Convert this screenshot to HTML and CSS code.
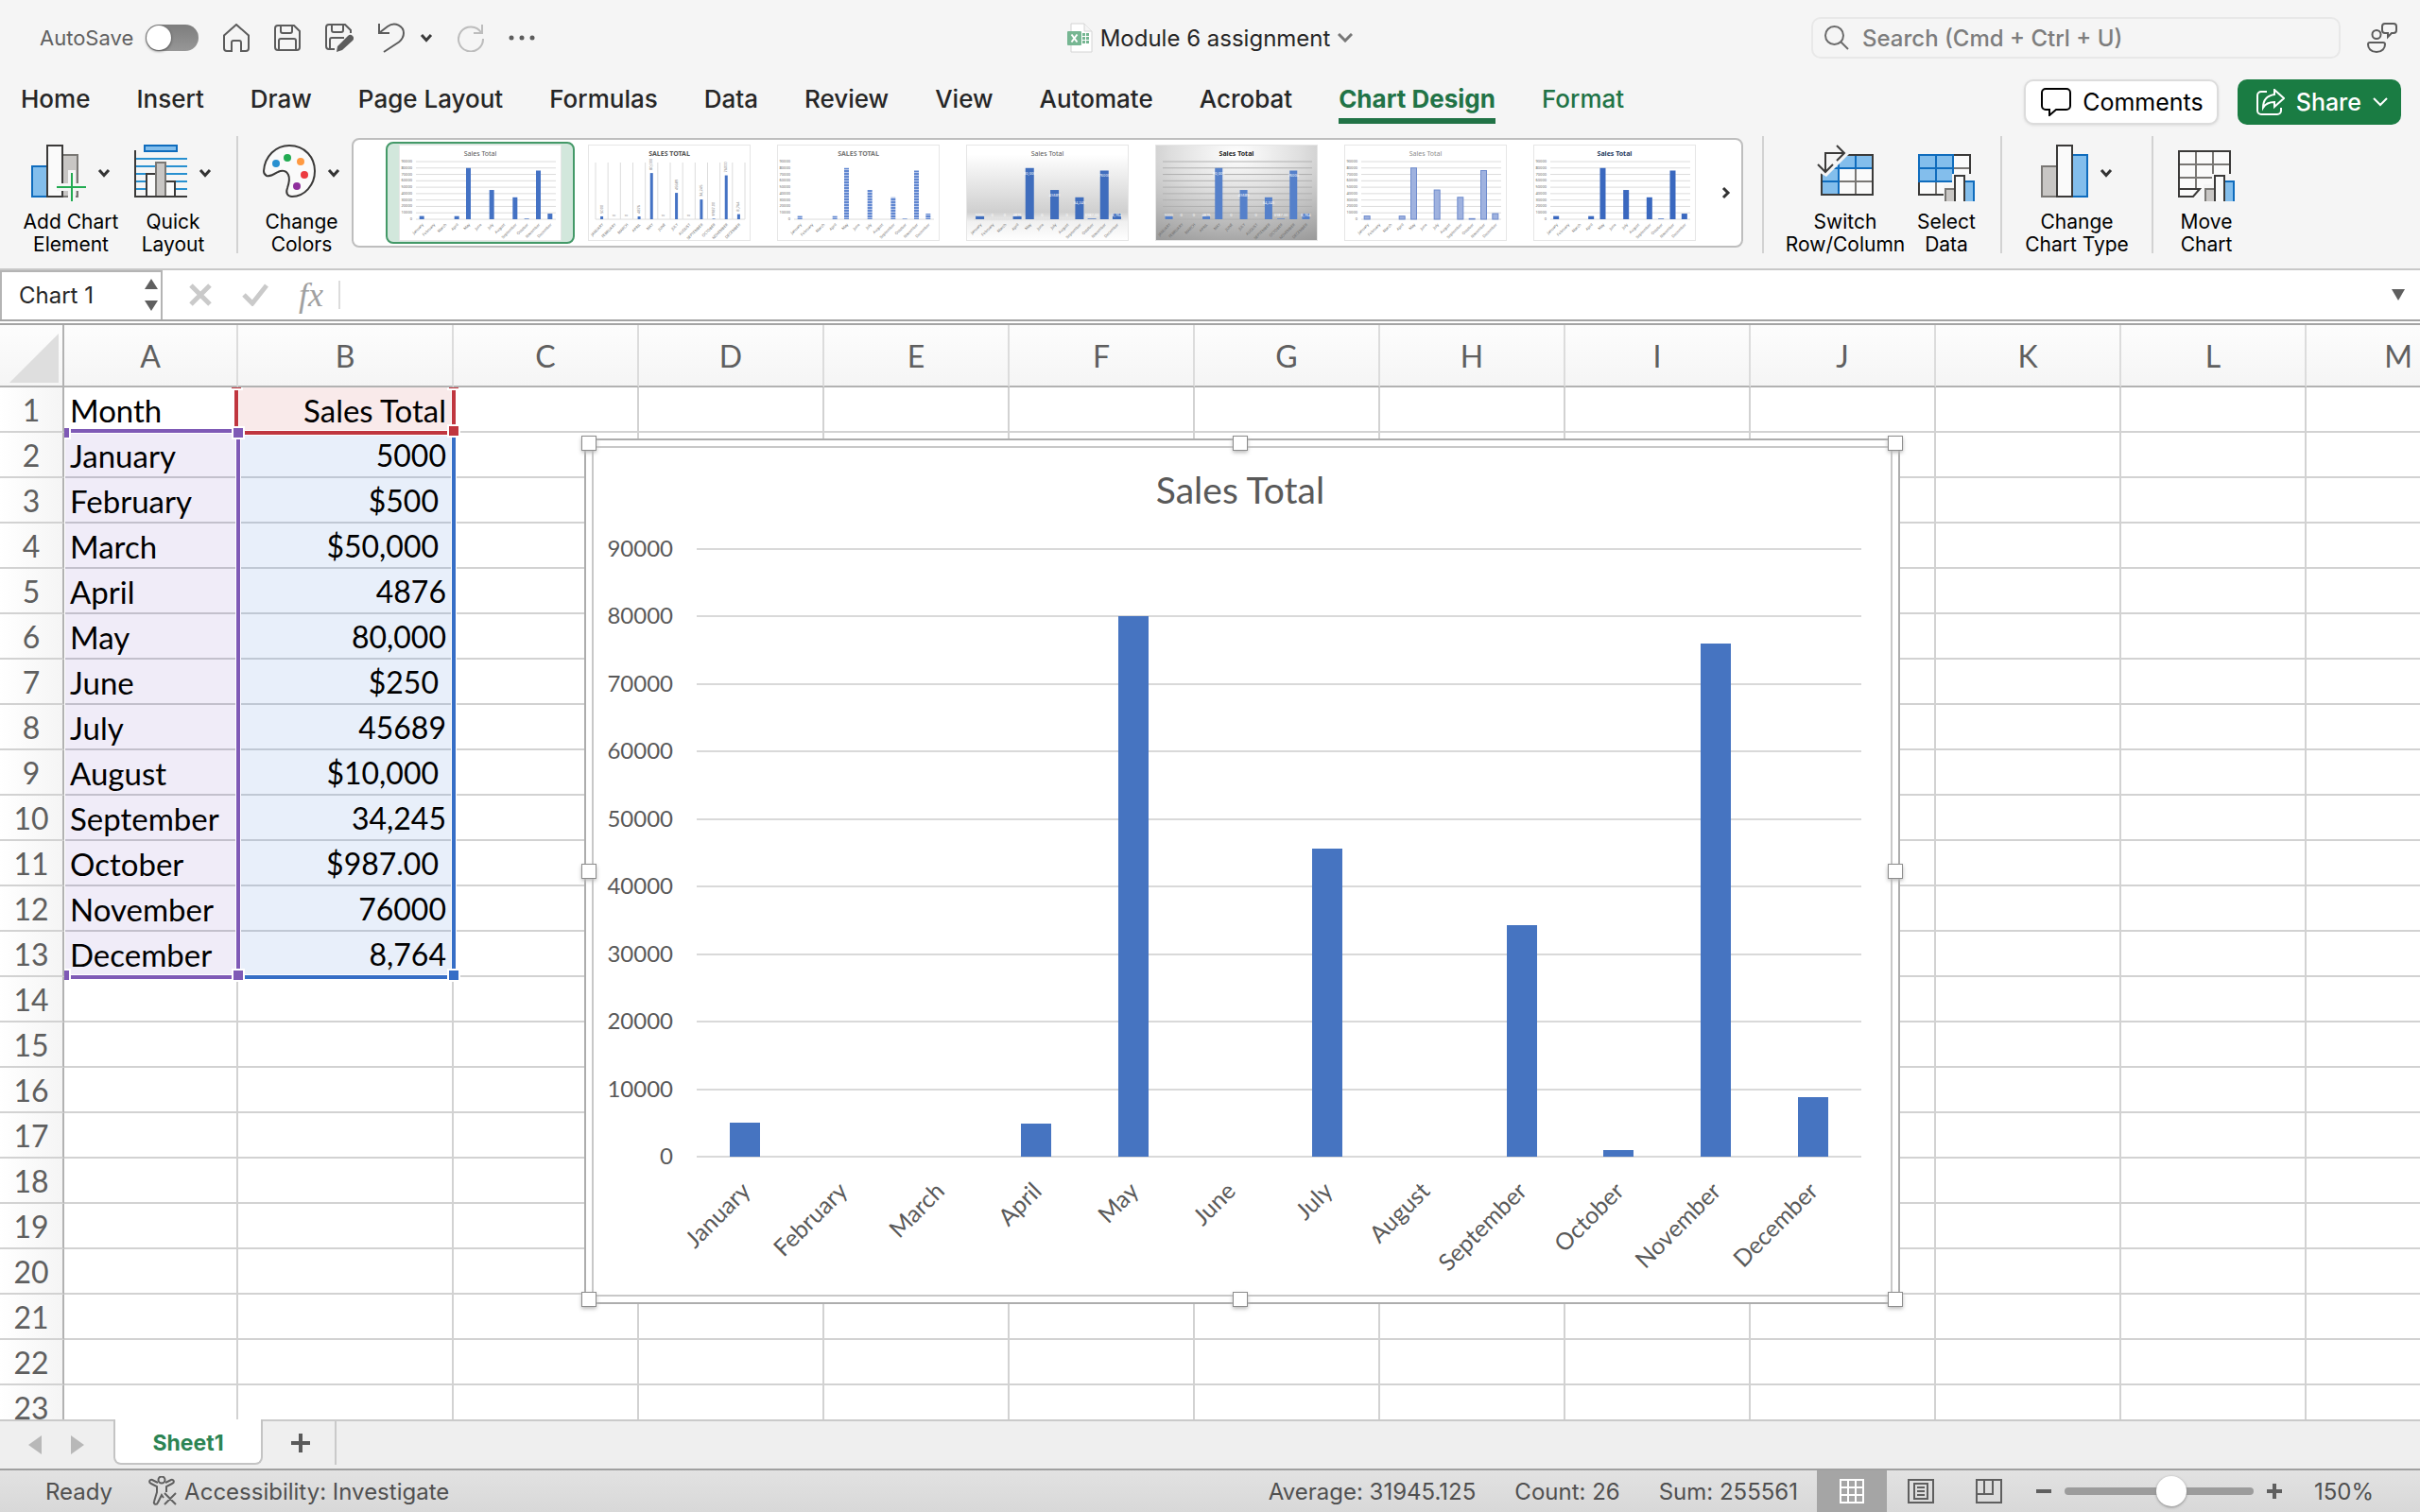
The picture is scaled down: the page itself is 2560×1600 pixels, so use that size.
FILE: index.html
```html
<!DOCTYPE html>
<html lang="en">
<head>
    <meta charset="UTF-8">
    <meta name="viewport" content="width=device-width, initial-scale=1.0">
    <title>Module 6 assignment</title>
    <link rel="stylesheet" href="styles.css">
</head>
<body>
    <svg class="defs" aria-hidden="true">
        <symbol id="chevron" viewBox="0 0 14 10">
            <path d="M2 2l5 5.500 5-5.500" fill="none" stroke="currentColor" stroke-width="3"/>
        </symbol>
        <symbol id="chevron-thin" viewBox="0 0 16 10">
            <path d="M1 1l7 7 7-7" fill="none" stroke="currentColor" stroke-width="2"/>
        </symbol>
        <symbol id="mini-bars" viewBox="0 0 34 34">
            <rect x="-1" y="11" width="13" height="24" fill="#f5f5f5"/>
            <rect x="9" y="-1" width="26" height="36" fill="#f5f5f5"/>
            <rect x="2" y="16" width="11" height="16" fill="#c8c6c4" stroke="#797774" stroke-width="2"/>
            <rect x="22" y="8" width="10" height="24" fill="#83beec" stroke="#0f6cbd" stroke-width="2"/>
            <rect x="12" y="2" width="10" height="30" fill="#fafafa" stroke="#3b3a39" stroke-width="2"/>
        </symbol>
    </svg>

    <header class="titlebar">
        <div class="quick">
            <label class="autosave">AutoSave <input type="checkbox" class="toggle"></label>
            <button class="icon" aria-label="Home">
                <svg width="28" height="30" viewBox="0 0 28 30"><path d="M1 12.500L14 1l13 11.500V26a3 3 0 0 1-3 3h-5v-9a2 2 0 0 0-2-2h-6a2 2 0 0 0-2 2v9H4a3 3 0 0 1-3-3z"/></svg>
            </button>
            <button class="icon" aria-label="Save">
                <svg width="28" height="28" viewBox="0 0 28 28"><path d="M4 1h17l6 6v17a3 3 0 0 1-3 3H4a3 3 0 0 1-3-3V4a3 3 0 0 1 3-3zM7 1v6a2 2 0 0 0 2 2h8a2 2 0 0 0 2-2V1M5 27V17a2 2 0 0 1 2-2h14a2 2 0 0 1 2 2v10"/></svg>
            </button>
            <button class="icon" aria-label="Save as">
                <svg width="30" height="30" viewBox="0 0 30 30"><path d="M10 27H4a3 3 0 0 1-3-3V4a3 3 0 0 1 3-3h17l6 6v3M7 1v6a2 2 0 0 0 2 2h8a2 2 0 0 0 2-2V1M5 27V17a2 2 0 0 1 2-2h13"/><path class="solid" d="M13 24L24 13a3.500 3.500 0 0 1 5 5L18 28l-6 2z"/></svg>
            </button>
            <div class="split">
                <button class="icon" aria-label="Undo">
                    <svg width="28" height="32" viewBox="0 0 28 32"><path d="M1 1v10h11M1.500 10.500L10 4c8-6 17 0 17 7 0 4-2 7-5 9.500L6 31"/></svg>
                </button>
                <button class="icon dark" aria-label="Undo history"><svg width="14" height="10"><use href="#chevron"/></svg></button>
            </div>
            <button class="icon off" aria-label="Redo">
                <svg width="28" height="30" viewBox="0 0 28 30"><path d="M25 9.500A13 13 0 1 0 27 16M26 1v9h-9"/></svg>
            </button>
            <button class="icon" aria-label="More">
                <svg width="28" height="6" viewBox="0 0 28 6"><g class="solid"><circle cx="3" cy="3" r="2.500"/><circle cx="14" cy="3" r="2.500"/><circle cx="25" cy="3" r="2.500"/></g></svg>
            </button>
        </div>

        <button class="document">
            <svg width="27" height="32" viewBox="0 0 27 32">
                <path d="M4 1h14l8 8v22H4z" fill="#fff" stroke="#d4d4d4"/>
                <path d="M18 1v8h8" fill="#f4f4f4" stroke="#d4d4d4"/>
                <rect y="9" width="15" height="15" rx="1" fill="#76b692"/>
                <path d="M4.500 12.500l6 8M10.500 12.500l-6 8" stroke="#fff" stroke-width="2"/>
                <path d="M16 12.500h7M16 16.500h7M16 20.500h7" stroke="#76b692" stroke-width="3" stroke-dasharray="3 1"/>
            </svg>
            Module 6 assignment
            <svg width="16" height="10" viewBox="0 0 16 10" class="muted"><path d="M1 1l7 7 7-7" fill="none" stroke="currentColor" stroke-width="3"/></svg>
        </button>

        <div class="find">
            <label class="search">
                <svg width="26" height="26" viewBox="0 0 26 26"><circle cx="10.500" cy="10.500" r="9.500"/><path d="M17 17l8 8"/></svg>
                <input type="search" aria-label="Search" placeholder="Search (Cmd + Ctrl + U)">
            </label>
            <button class="icon" aria-label="Feedback">
                <svg width="32" height="32" viewBox="0 0 32 32"><circle cx="10" cy="12.500" r="4.500"/><path d="M3 21h14a2 2 0 0 1 2 2c0 4-3 8-9 8s-9-4-9-8a2 2 0 0 1 2-2zM19 1h9a3 3 0 0 1 3 3v4a3 3 0 0 1-3 3h-2l-4 4v-4h-3a3 3 0 0 1-3-3V4a3 3 0 0 1 3-3z"/></svg>
            </button>
        </div>
    </header>

    <nav class="tabs">
        <a href="#">Home</a>
        <a href="#">Insert</a>
        <a href="#">Draw</a>
        <a href="#">Page Layout</a>
        <a href="#">Formulas</a>
        <a href="#">Data</a>
        <a href="#">Review</a>
        <a href="#">View</a>
        <a href="#">Automate</a>
        <a href="#">Acrobat</a>
        <a href="#" class="context active">Chart Design</a>
        <a href="#" class="context">Format</a>
        <div class="actions">
            <button class="comments">
                <svg width="32" height="30" viewBox="0 0 32 30"><path d="M5 1h22a4 4 0 0 1 4 4v14a4 4 0 0 1-4 4H16l-7 6v-6H5a4 4 0 0 1-4-4V5a4 4 0 0 1 4-4z"/></svg>
                Comments
            </button>
            <button class="share">
                <svg width="30" height="28" viewBox="0 0 30 28"><path d="M11 3H5a4 4 0 0 0-4 4v16a4 4 0 0 0 4 4h17a4 4 0 0 0 4-4v-3M19 1v5C12 7 7 11 7 20c3-5 7-6 12-6v5l10-9z"/></svg>
                Share
                <svg width="16" height="10"><use href="#chevron-thin"/></svg>
            </button>
        </div>
    </nav>

    <section class="ribbon">
        <div class="group">
            <button class="tool add">
                <span>
                    <svg width="58" height="60" viewBox="0 0 58 60">
                        <rect x="33" y="11" width="16" height="44" fill="#c8c6c4" stroke="#797774" stroke-width="2"/>
                        <rect x="1" y="23" width="17" height="32" fill="#83beec" stroke="#0f6cbd" stroke-width="2"/>
                        <rect x="17" y="1" width="16" height="54" fill="#fafafa" stroke="#3b3a39" stroke-width="2"/>
                        <path d="M27 45h31M43 27v33" stroke="#f5f5f5" stroke-width="8"/>
                        <path d="M27 45h31M43 30v30" stroke="#22ab52" stroke-width="2"/>
                    </svg>
                    <svg width="14" height="10"><use href="#chevron"/></svg>
                </span>
                Add Chart<br>Element
            </button>
            <button class="tool">
                <span>
                    <svg width="56" height="60" viewBox="0 0 56 60">
                        <path d="M2 15h54M2 23h54M2 31h54M2 39h54M2 47h54" stroke="#2890d0" stroke-width="2"/>
                        <rect x="11" y="1" width="34" height="6" fill="#83beec" stroke="#0f6cbd" stroke-width="2"/>
                        <rect x="13" y="31" width="10" height="24" fill="#fafafa" stroke="#3b3a39" stroke-width="2"/>
                        <rect x="33" y="39" width="10" height="16" fill="#fafafa" stroke="#3b3a39" stroke-width="2"/>
                        <rect x="23" y="19" width="10" height="36" fill="#c8c6c4" stroke="#797774" stroke-width="2"/>
                        <path d="M1 6v49h55" fill="none" stroke="#3b3a39" stroke-width="2"/>
                    </svg>
                    <svg width="14" height="10"><use href="#chevron"/></svg>
                </span>
                Quick<br>Layout
            </button>
        </div>
        <div class="divider"></div>
        <button class="tool">
            <span>
                <svg width="56" height="60" viewBox="0 0 56 60">
                    <path d="M1 28C2 12 14 1 28 1c17 0 27 13 27 27 0 15-11 27-24 27-5 0-7-4-5-9 2-6 3-10 1-14-2-5-7-5-11-3-5 3-8 5-12 4-2-1-3-3-3-5z" fill="#fafafa" stroke="#3b3a39" stroke-width="2"/>
                    <circle cx="14" cy="20" r="4" fill="#2890d0"/><circle cx="26" cy="14" r="4" fill="#22ab52"/>
                    <circle cx="40" cy="18" r="4" fill="#ff9a42"/><circle cx="44" cy="32" r="4" fill="#ec3a3f"/>
                    <circle cx="36" cy="44" r="4" fill="#8f2f9c"/>
                </svg>
                <svg width="14" height="10"><use href="#chevron"/></svg>
            </span>
            Change<br>Colors
        </button>
        <div class="gallery">
            <div class="styles" id="styles"></div>
            <button class="next" aria-label="More styles">
                <svg width="10" height="14" viewBox="0 0 10 14"><path d="M2 2l5 5-5 5" fill="none" stroke="currentColor" stroke-width="3"/></svg>
            </button>
        </div>
        <div class="divider"></div>
        <div class="group">
            <button class="tool switch">
                <span>
                    <svg width="60" height="60" viewBox="0 0 60 60">
                        <rect x="5" y="11" width="54" height="42" fill="#fafafa"/>
                        <path d="M5 11h54v14H23v28H5z" fill="#83beec"/>
                        <path d="M23 39h36M41 25v28" stroke="#797774" stroke-width="2"/>
                        <path d="M5 25h54M23 11v42M41 11v14M5 39h18" stroke="#0f6cbd" stroke-width="2"/>
                        <rect x="5" y="11" width="54" height="42" fill="none" stroke="#3b3a39" stroke-width="2"/>
                        <path d="M0 0h34v10L10 34l-10-6z" fill="#f5f5f5"/>
                        <path d="M9 29V9h20M1 21l8 8 8-8M21 1l8 8-8 8" fill="none" stroke="#3b3a39" stroke-width="2"/>
                    </svg>
                </span>
                Switch<br>Row/Column
            </button>
            <button class="tool select">
                <span>
                    <svg width="60" height="60" viewBox="0 0 60 60">
                        <rect x="1" y="11" width="54" height="42" fill="#fafafa"/>
                        <path d="M1 39h54M19 39v14M37 25h18" stroke="#797774" stroke-width="2"/>
                        <rect x="1" y="11" width="54" height="42" fill="none" stroke="#3b3a39" stroke-width="2"/>
                        <path d="M1 11h36v28H1zM1 25h36M19 11v28" fill="#83beec" stroke="#0f6cbd" stroke-width="2"/>
                        <use href="#mini-bars" x="27" y="31" width="34" height="34"/>
                    </svg>
                </span>
                Select<br>Data
            </button>
        </div>
        <div class="divider"></div>
        <button class="tool type">
            <span>
                <svg width="50" height="60" viewBox="0 0 50 60">
                    <rect x="1" y="23" width="17" height="32" fill="#c8c6c4" stroke="#797774" stroke-width="2"/>
                    <rect x="33" y="11" width="16" height="44" fill="#83beec" stroke="#0f6cbd" stroke-width="2"/>
                    <rect x="17" y="1" width="16" height="54" fill="#fafafa" stroke="#3b3a39" stroke-width="2"/>
                </svg>
                <svg width="14" height="10"><use href="#chevron"/></svg>
            </span>
            Change<br>Chart Type
        </button>
        <div class="divider"></div>
        <button class="tool move">
            <span>
                <svg width="60" height="60" viewBox="0 0 60 60">
                    <path d="M1 7h54v41H22l-6 7H1z" fill="#fafafa"/>
                    <path d="M1 21h54M1 35h54M19 7v40M37 7v40" stroke="#797774" stroke-width="2"/>
                    <path d="M55 48V7H1v48h15l7-8H1" fill="none" stroke="#3b3a39" stroke-width="2"/>
                    <use href="#mini-bars" x="27" y="31" width="34" height="34"/>
                </svg>
            </span>
            Move<br>Chart
        </button>
    </section>

    <section class="formula-bar">
        <div class="name-box">
            <input type="text" aria-label="Name box" value="Chart 1">
            <svg width="14" height="34" viewBox="0 0 14 34"><path d="M7 0l7 11H0zM7 34l7-11H0z" fill="#6a6a6a"/></svg>
        </div>
        <button aria-label="Cancel"><svg width="24" height="24" viewBox="0 0 24 24"><path d="M2 2l20 20M22 2L2 22"/></svg></button>
        <button aria-label="Enter"><svg width="28" height="24" viewBox="0 0 28 24"><path d="M2 12l9 9L26 2"/></svg></button>
        <button class="fx">fx</button>
        <input type="text" class="formula" aria-label="Formula">
        <button aria-label="Expand"><svg width="14" height="12" viewBox="0 0 14 12"><path class="fill" d="M0 0h14L7 12z"/></svg></button>
    </section>

    <main class="sheet">
        <table>
            <colgroup id="cols"></colgroup>
            <thead id="head"></thead>
            <tbody id="rows"></tbody>
        </table>
        <div class="range values"><i></i></div>
        <div class="range series"><i></i><i></i><i></i></div>
        <div class="range months"><i></i><i></i><i></i><i></i></div>
        <div class="chart">
            <div class="frame"></div>
            <svg id="chart" viewBox="0 0 1392 916"></svg>
            <i class="n w"></i><i class="n c"></i><i class="n e"></i>
            <i class="m w"></i><i class="m e"></i>
            <i class="s w"></i><i class="s c"></i><i class="s e"></i>
        </div>
    </main>

    <div class="sheet-tabs">
        <button class="nav" aria-label="Previous sheet"><svg width="14" height="20" viewBox="0 0 14 20"><path d="M14 0v20L0 10z"/></svg></button>
        <button class="nav" aria-label="Next sheet"><svg width="14" height="20" viewBox="0 0 14 20"><path d="M0 0v20l14-10z"/></svg></button>
        <button class="sheet-tab">Sheet1</button>
        <button class="new" aria-label="New sheet"><svg width="20" height="20" viewBox="0 0 20 20"><path d="M10 0v20M0 10h20" stroke="#5a5a5a" stroke-width="4"/></svg></button>
    </div>

    <footer class="status">
        <span>Ready</span>
        <button class="access">
            <svg width="32" height="32" viewBox="0 0 32 32"><circle cx="14" cy="4" r="3.500"/><path d="M10 7L4 4C1 3 0 7 3 8l6 3v6L6 27c-1 3 3 4 4 1l4-8 2 3M18 7l6-3c3-1 4 3 1 4l-6 3v6M17 18l12 12M29 18L17 30"/></svg>
            Accessibility: Investigate
        </button>
        <div class="totals">
            <span>Average: 31945.125</span>
            <span>Count: 26</span>
            <span>Sum: 255561</span>
        </div>
        <button class="view on" aria-label="Normal view"><svg width="26" height="26" viewBox="0 0 26 26"><path d="M1 1h24v24H1zM1 9h24M1 17h24M9 1v24M17 1v24"/></svg></button>
        <button class="view" aria-label="Page layout view"><svg width="28" height="26" viewBox="0 0 28 26"><path d="M1 1h26v24H1zM7 5h14v16H7zM10 9h8M10 13h8M10 17h8"/></svg></button>
        <button class="view" aria-label="Page break view"><svg width="28" height="26" viewBox="0 0 28 26"><path d="M1 1h26v24H1zM1 16h17V1M9 1v15"/></svg></button>
        <div class="zoom">
            <button aria-label="Zoom out"><svg width="16" height="16" viewBox="0 0 16 16"><path d="M0 8h16"/></svg></button>
            <input type="range" aria-label="Zoom" min="0" max="100" value="58">
            <button aria-label="Zoom in"><svg width="16" height="16" viewBox="0 0 16 16"><path d="M0 8h16M8 0v16"/></svg></button>
        </div>
        <span class="percent">150%</span>
    </footer>
    <script src="script.js"></script>
</body>
</html>
```

FILE: styles.css
```css
* {
    box-sizing: border-box;
}
body {
    margin: 0;
    height: 100vh;
    display: flex;
    flex-direction: column;
    overflow: hidden;
    background: #f5f5f5;
    color: #262626;
    font-family: Inter, "Liberation Sans", sans-serif;
    font-size: 22px;
}
button, input {
    font: inherit;
    color: inherit;
    border: none;
    background: none;
    padding: 0;
}
svg {
    display: block;
    flex: none;
}
.defs {
    position: absolute;
    width: 0;
    height: 0;
}

/* title bar */
.titlebar {
    display: grid;
    grid-template-columns: 1fr auto 1fr;
    align-items: center;
    height: 80px;
    padding: 0 24px;
}
.quick, .find, .document, .split {
    display: flex;
    align-items: center;
}
.quick {
    gap: 26px;
    padding-left: 18px;
}
.split {
    gap: 16px;
}
.autosave {
    display: flex;
    align-items: center;
    gap: 13px;
    color: #616161;
}
.toggle {
    appearance: none;
    margin: 0;
    width: 56px;
    height: 28px;
    border-radius: 14px;
    background: linear-gradient(#7d7d7d, #979797);
}
.toggle::before {
    content: "";
    display: block;
    width: 26px;
    height: 26px;
    margin: 1px;
    border-radius: 50%;
    background: #fff;
    box-shadow: 0 1px 3px #444;
}
.icon {
    color: #5c5c5c;
}
.icon svg {
    fill: none;
    stroke: currentColor;
    stroke-width: 2;
}
.icon .solid {
    fill: currentColor;
    stroke: none;
}
.icon.dark {
    color: #3a3a3a;
}
.icon.off {
    color: #bdbdbd;
}
.document {
    gap: 8px;
    font-size: 24px;
}
.muted {
    color: #777;
}
.find {
    justify-content: flex-end;
    gap: 28px;
}
.search {
    display: flex;
    align-items: center;
    gap: 14px;
    width: 560px;
    height: 44px;
    padding: 0 12px;
    border: 2px solid #e8e8e8;
    border-radius: 10px;
    font-size: 24px;
    font-weight: 500;
}
.search svg {
    fill: none;
    stroke: #6b6b6b;
    stroke-width: 2;
}
.search input {
    flex: 1;
    outline: none;
}
.search input::placeholder {
    color: #7d7d7d;
}

/* tabs */
.tabs {
    display: flex;
    align-items: center;
    gap: 49px;
    height: 56px;
    padding: 0 20px 0 22px;
    font-size: 26px;
    font-weight: 500;
}
.tabs a {
    color: inherit;
    text-decoration: none;
    line-height: 40px;
    border-bottom: 6px solid transparent;
}
.tabs .context {
    color: #217346;
}
.tabs .active {
    font-weight: 700;
    border-image: linear-gradient(#217346, #217346) 1;
}
.actions {
    display: flex;
    gap: 20px;
    margin-left: auto;
    font-size: 25px;
}
.actions button {
    display: flex;
    align-items: center;
    gap: 12px;
    height: 48px;
    padding: 0 14px 0 16px;
    border-radius: 10px;
}
.actions path {
    fill: none;
    stroke: currentColor;
    stroke-width: 2;
}
.comments {
    background: #fff;
    color: #000;
    border: 2px solid #dcdcdc;
    box-shadow: 0 1px 3px #ddd;
    font-weight: 400;
}
.actions .share {
    background: #1a7c43;
    color: #fff;
    padding: 0 14px 0 20px;
}

/* ribbon */
.ribbon {
    display: flex;
    align-items: flex-start;
    height: 150px;
    padding: 8px 20px 0;
    border-bottom: 2px solid #c8c8c8;
}
.group {
    display: flex;
    gap: 8px;
}
.tool {
    width: 90px;
    padding-top: 9px;
    flex: none;
    line-height: 24px;
    font-size: 21px;
    color: #000;
    white-space: nowrap;
}
.tool span {
    display: flex;
    align-items: center;
    justify-content: center;
    gap: 12px;
    margin-bottom: 10px;
    color: #333;
}
.tool.add {
    width: 110px;
}
.tool.switch {
    width: 128px;
}
.tool.select {
    width: 70px;
}
.tool.type {
    width: 114px;
}
.tool.move {
    width: 68px;
}
.divider {
    width: 2px;
    height: 124px;
    margin: 0 22px;
    background: #d2d2d2;
}
.gallery {
    display: flex;
    flex: 0 1 1472px;
    min-width: 0;
    height: 116px;
    margin: 2px -2px 0 8px;
    padding: 2px 8px 2px 34px;
    border: 2px solid #bebebe;
    border-radius: 8px;
    background: #fff;
}
.styles {
    display: flex;
    flex: 1;
    min-width: 0;
    overflow: hidden;
}
.styles button {
    width: 200px;
    height: 108px;
    flex: none;
    border: 2px solid transparent;
    border-radius: 8px;
}
.styles .selected {
    border-color: #449968;
    background: #d2e7dc;
}
.styles svg {
    width: 172px;
    height: 102px;
    margin: 0 auto;
    outline: 1px solid #e6e6e6;
    outline-offset: -1px;
    background: #fff;
    font-family: "Noto Sans", sans-serif;
}
.next {
    padding-right: 3px;
    color: #333;
}

/* formula bar */
.formula-bar {
    display: flex;
    align-items: center;
    gap: 32px;
    height: 58px;
    padding-right: 16px;
    background: #fff;
    border-bottom: 6px double #a5a5a5;
}
.formula-bar path {
    fill: none;
    stroke: #cacaca;
    stroke-width: 5;
}
.formula-bar .fill {
    fill: #5f5f5f;
    stroke: none;
}
.name-box {
    display: flex;
    align-items: center;
    width: 172px;
    height: 52px;
    margin-right: -4px;
    padding: 0 3px 2px 18px;
    border: 2px solid #b4b4b4;
    border-width: 2px 2px 0;
    font-size: 24px;
}
.name-box input {
    width: 100%;
    min-width: 0;
}
.formula-bar .name-box path {
    stroke: none;
    fill: #5f5f5f;
}
.fx {
    font: italic 36px "Liberation Serif", serif;
    color: #a0a0a0;
}
.formula {
    flex: 1;
    height: 30px;
    margin-left: -16px;
    border-left: 2px solid #dcdcdc;
}

/* grid */
.sheet {
    position: relative;
    flex: 1;
    min-height: 0;
    overflow: hidden;
    background: #fff;
    font-family: Lato, sans-serif;
    font-size: 32px;
}
.sheet table {
    table-layout: fixed;
    width: 2636px;
    border-collapse: separate;
    border-spacing: 0;
}
.sheet col {
    width: 196px;
}
.sheet .col-head {
    width: 68px;
}
.sheet .col-a {
    width: 184px;
}
.sheet .col-b {
    width: 228px;
}
.sheet th, .sheet td {
    height: 48px;
    padding: 2px 6px 0;
    line-height: 40px;
    border: solid #d2d2d2;
    border-width: 0 2px 2px 0;
    white-space: nowrap;
}
.sheet th {
    font-weight: 400;
    color: #5f5f5f;
}
.sheet td {
    color: #000;
}
.sheet thead th {
    height: 66px;
    border-bottom-color: #b2b2b2;
    border-right-color: #dcdcdc;
    background: linear-gradient(#fdfdfd, #f5f5f5);
}
.sheet tbody th, .sheet thead th:first-child {
    padding: 2px 0 0;
    border-right-color: #b2b2b2;
}
.sheet tbody th {
    background: linear-gradient(90deg, #fff, #f5f5f5);
}
.corner {
    display: block;
    margin: 4px 0 0 10px;
}
.sheet .label {
    font-size: 33px;
}
.sheet .month {
    background: #f0ecf8;
    border-bottom-color: #c3c0cc;
}
.sheet .amount {
    background: #e8effa;
    border-bottom-color: #c0c8d4;
    text-align: right;
}
.sheet .name {
    background: #f9eaea;
    text-align: right;
}
.sheet .currency {
    padding-right: 14px;
}

/* chart source ranges */
.range {
    position: absolute;
    border: 4px solid;
    box-shadow: 0 0 0 1px #fff, inset 0 0 0 1px #fff;
}
.range i, .chart i {
    position: absolute;
    background: currentColor;
}
.range i {
    width: 14px;
    height: 14px;
    border: 2px solid #fff;
}
.range i:nth-child(1) { right: -9px; bottom: -7px; }
.range i:nth-child(2) { right: -9px; top: -7px; }
.range i:nth-child(3) { left: -9px; top: -7px; }
.range i:nth-child(4) { left: -7px; bottom: -7px; }
.months {
    left: 68px;
    top: 110px;
    width: 186px;
    height: 582px;
    border-left: none;
    color: #7f5ab6;
    clip-path: inset(-10px -10px -10px 0);
}
.months i:nth-child(3) { left: -7px; }
.series {
    left: 248px;
    top: 62px;
    width: 234px;
    height: 54px;
    color: #c0363f;
    border-top: none;
    clip-path: inset(4px -10px -10px -10px);
}
.values {
    left: 250px;
    top: 112px;
    width: 232px;
    height: 580px;
    color: #366ec6;
}

/* chart object */
.chart {
    position: absolute;
    left: 618px;
    top: 120px;
    width: 1392px;
    height: 916px;
    background: #fff;
    border: 2px solid #adadad;
}
.chart svg {
    position: absolute;
    left: -2px;
    top: -2px;
    width: 1392px;
    height: 916px;
}
.frame {
    position: absolute;
    inset: 6px;
    border: 2px solid #c8c8c8;
}
.chart i {
    width: 16px;
    height: 16px;
    background: #fff;
    border: 1px solid #8c8c8c;
    box-shadow: 0 2px 4px #bbb;
}
.chart .n { top: -5px; }
.chart .m { top: calc(50% - 8px); }
.chart .s { bottom: -5px; }
.chart .w { left: -5px; }
.chart .c { left: calc(50% - 10px); }
.chart .e { right: -5px; }

/* sheet tabs */
.sheet-tabs {
    display: flex;
    height: 52px;
    padding-left: 30px;
    border-top: 2px solid #cacaca;
    background: #efefef;
}
.nav {
    margin-right: 31px;
}
.nav path {
    fill: #b8b8b8;
}
.sheet-tab {
    width: 158px;
    height: 48px;
    margin-top: -2px;
    padding-top: 4px;
    border: 2px solid #c4c4c4;
    border-top: none;
    border-radius: 0 0 8px 8px;
    background: #fff;
    color: #2c8453;
    font-size: 23px;
    font-weight: 700;
}
.new {
    height: 46px;
    padding: 0 26px 0 30px;
    border-right: 2px solid #cacaca;
}

/* status bar */
.status {
    display: flex;
    align-items: center;
    height: 46px;
    padding: 0 48px;
    border-top: 2px solid #a0a0a0;
    background: linear-gradient(#e2e2e2, #d8d8d8);
    color: #505050;
    font-size: 24px;
}
.status path, .status circle {
    fill: none;
    stroke: #5f5f5f;
    stroke-width: 2;
}
.access {
    display: flex;
    align-items: center;
    gap: 6px;
    margin-left: 38px;
}
.totals {
    display: flex;
    gap: 41px;
    margin-left: auto;
    padding-right: 20px;
}
.view {
    display: flex;
    justify-content: center;
    align-items: center;
    width: 72px;
    height: 44px;
}
.view.on {
    width: 74px;
    background: #a5a5a5;
}
.view.on path {
    stroke: #fff;
}
.zoom {
    display: flex;
    align-items: center;
    gap: 14px;
    margin-left: 14px;
}
.zoom path {
    stroke-width: 4;
}
.zoom input {
    appearance: none;
    width: 200px;
    height: 8px;
    margin: 0;
    border-radius: 4px;
    background: #9c9c9c;
}
.zoom input::-webkit-slider-thumb {
    appearance: none;
    width: 32px;
    height: 32px;
    border-radius: 50%;
    background: #fff;
    box-shadow: 0 1px 3px #888;
}
.percent {
    width: 64px;
    margin-left: 34px;
}
```

FILE: script.js
```javascript
const data = [
    ["January", "5000", 5000],
    ["February", "$500", 0],
    ["March", "$50,000", 0],
    ["April", "4876", 4876],
    ["May", "80,000", 80000],
    ["June", "$250", 0],
    ["July", "45689", 45689],
    ["August", "$10,000", 0],
    ["September", "34,245", 34245],
    ["October", "$987.00", 987],
    ["November", "76000", 76000],
    ["December", "8,764", 8764]
];
const letters = "ABCDEFGHIJKLM".split("");

function buildSheet() {
    document.getElementById("cols").innerHTML = '<col class="col-head"><col class="col-a"><col class="col-b">' + "<col>".repeat(11);
    document.getElementById("head").innerHTML =
        '<tr><th aria-label="Select all"><svg class="corner" width="52" height="52"><path d="M52 0v52H0z" fill="#dedede"/></svg></th>' +
        letters.map(l => `<th>${l}</th>`).join("") + "</tr>";

    let html = "";
    for (let r = 1; r <= 23; r++) {
        let a = "<td></td>", b = "<td></td>";
        if (r === 1) {
            a = '<td class="label">Month</td>';
            b = '<td class="label name">Sales Total</td>';
        } else if (data[r - 2]) {
            let [month, text] = data[r - 2];
            a = `<td class="label month">${month}</td>`;
            b = `<td class="amount${text[0] === "$" ? " currency" : ""}">${text}</td>`;
        }
        html += `<tr><th>${r}</th>${a}${b}${"<td></td>".repeat(11)}</tr>`;
    }
    document.getElementById("rows").innerHTML = html;
}

function buildChart() {
    const left = 119, right = 1351, base = 760, step = 643 / 9;
    const slot = (right - left) / 12;
    let svg = '<text x="694" y="69" font-size="39" text-anchor="middle" fill="#595959">Sales Total</text>';
    for (let i = 0; i <= 9; i++) {
        let y = Math.round(base - i * step);
        svg += `<path d="M${left} ${y}H${right}" stroke="#d9d9d9" stroke-width="2"/>`;
        svg += `<text x="94" y="${y + 8}" font-size="24" text-anchor="end" fill="#595959">${i * 10000}</text>`;
    }
    data.forEach(([month, , value], i) => {
        let x = left + slot * (i + 0.5);
        let h = value / 10000 * step;
        if (value) svg += `<rect x="${Math.round(x - 16)}" y="${Math.round(base - h)}" width="32" height="${Math.round(h)}" fill="#4674c1"/>`;
        svg += `<text transform="translate(${x + 7} 798) rotate(-45)" font-size="25" text-anchor="end" fill="#595959">${month}</text>`;
    });
    document.getElementById("chart").innerHTML = svg;
}

// small previews in the chart styles gallery
const looks = [
    { bar: 5, grid: "h", axis: true, fill: "#4472c4", title: "#555" },
    { bar: 3, grid: "v", caps: true, upper: true, labels: "side", bold: true, fill: "#4472c4", title: "#555" },
    { bar: 5, axis: true, caps: true, bold: true, fill: "url(#stripes)", title: "#777" },
    { bar: 9, labels: "in", fill: "#3f6dbd", title: "#555", back: "url(#fade)" },
    { bar: 8, grid: "h", upper: true, labels: "in", bold: true, fill: "#5580ca", title: "#222", line: "#b0b0b0", back: "url(#steel)" },
    { bar: 6, grid: "h", axis: true, fill: "#9fb2df", edge: "#6e8bcd", title: "#8a8a8a" },
    { bar: 6, grid: "h", axis: true, bold: true, fill: "#3a68bf", title: "#243a5e" }
];

function preview(look) {
    const left = look.axis ? 18 : 8, right = 166, base = 79, top = look.labels === "side" ? 24 : 18;
    const slot = (right - left) / 12, step = (base - top) / 9;
    const line = look.line || "#dcdcdc";
    let svg = `<defs>
        <pattern id="stripes" width="4" height="3" patternUnits="userSpaceOnUse"><rect width="4" height="3" fill="#b9c8ea"/><rect width="4" height="2" fill="#5f86d0"/></pattern>
        <linearGradient id="fade" x2="0" y2="1"><stop offset=".1" stop-color="#fff"/><stop offset=".7" stop-color="#cfcfcf"/><stop offset=".8" stop-color="#f0f0f0"/><stop offset="1" stop-color="#fff"/></linearGradient>
        <radialGradient id="steel" cx=".5" cy=".1" r="1"><stop offset="0" stop-color="#fff"/><stop offset=".4" stop-color="#dedede"/><stop offset="1" stop-color="#9b9b9b"/></radialGradient>
    </defs>`;
    if (look.back) svg += `<rect width="172" height="102" fill="${look.back}"/>`;
    svg += `<text x="86" y="12" font-size="7" text-anchor="middle" font-weight="${look.bold ? 700 : 400}" fill="${look.title}">${look.caps ? "SALES TOTAL" : "Sales Total"}</text>`;
    for (let i = 0; i <= 9; i++) {
        let y = base - i * step;
        if (look.grid === "h" || i === 0) svg += `<path d="M${left} ${y}H${right}" stroke="${line}"/>`;
        if (look.axis) svg += `<text x="${left - 4}" y="${y + 1}" font-size="4" text-anchor="end" fill="#666">${i * 10000}</text>`;
    }
    if (look.grid === "v") {
        for (let i = 0; i <= 12; i++) svg += `<path d="M${left + i * slot} 19V${base}" stroke="${line}"/>`;
    }
    data.forEach(([month, text, value], i) => {
        let x = left + slot * (i + 0.5), h = value / 10000 * step;
        if (value) svg += `<rect x="${x - look.bar / 2}" y="${base - h}" width="${look.bar}" height="${h}" fill="${look.fill}" stroke="${look.edge || "none"}"/>`;
        let amount = value ? text : "0";
        if (look.labels === "side") svg += `<text transform="translate(${x + 1} ${base - h - 3}) rotate(-90)" font-size="4" fill="#777">${amount}</text>`;
        if (look.labels === "in") svg += `<text x="${x}" y="${value > 9000 ? base - h + 7 : base - 3}" font-size="4" text-anchor="middle" fill="#fff">${amount}</text>`;
        svg += `<text transform="translate(${x + 2} ${base + 6}) rotate(-45)" font-size="4" text-anchor="end" fill="#666">${look.upper ? month.toUpperCase() : month}</text>`;
    });
    return `<svg viewBox="0 0 172 102">${svg}</svg>`;
}

function buildStyles() {
    document.getElementById("styles").innerHTML = looks.map((look, i) =>
        `<button class="${i === 0 ? "selected" : ""}" aria-label="Style ${i + 1}">${preview(look)}</button>`).join("");
}

buildSheet();
buildChart();
buildStyles();
```
